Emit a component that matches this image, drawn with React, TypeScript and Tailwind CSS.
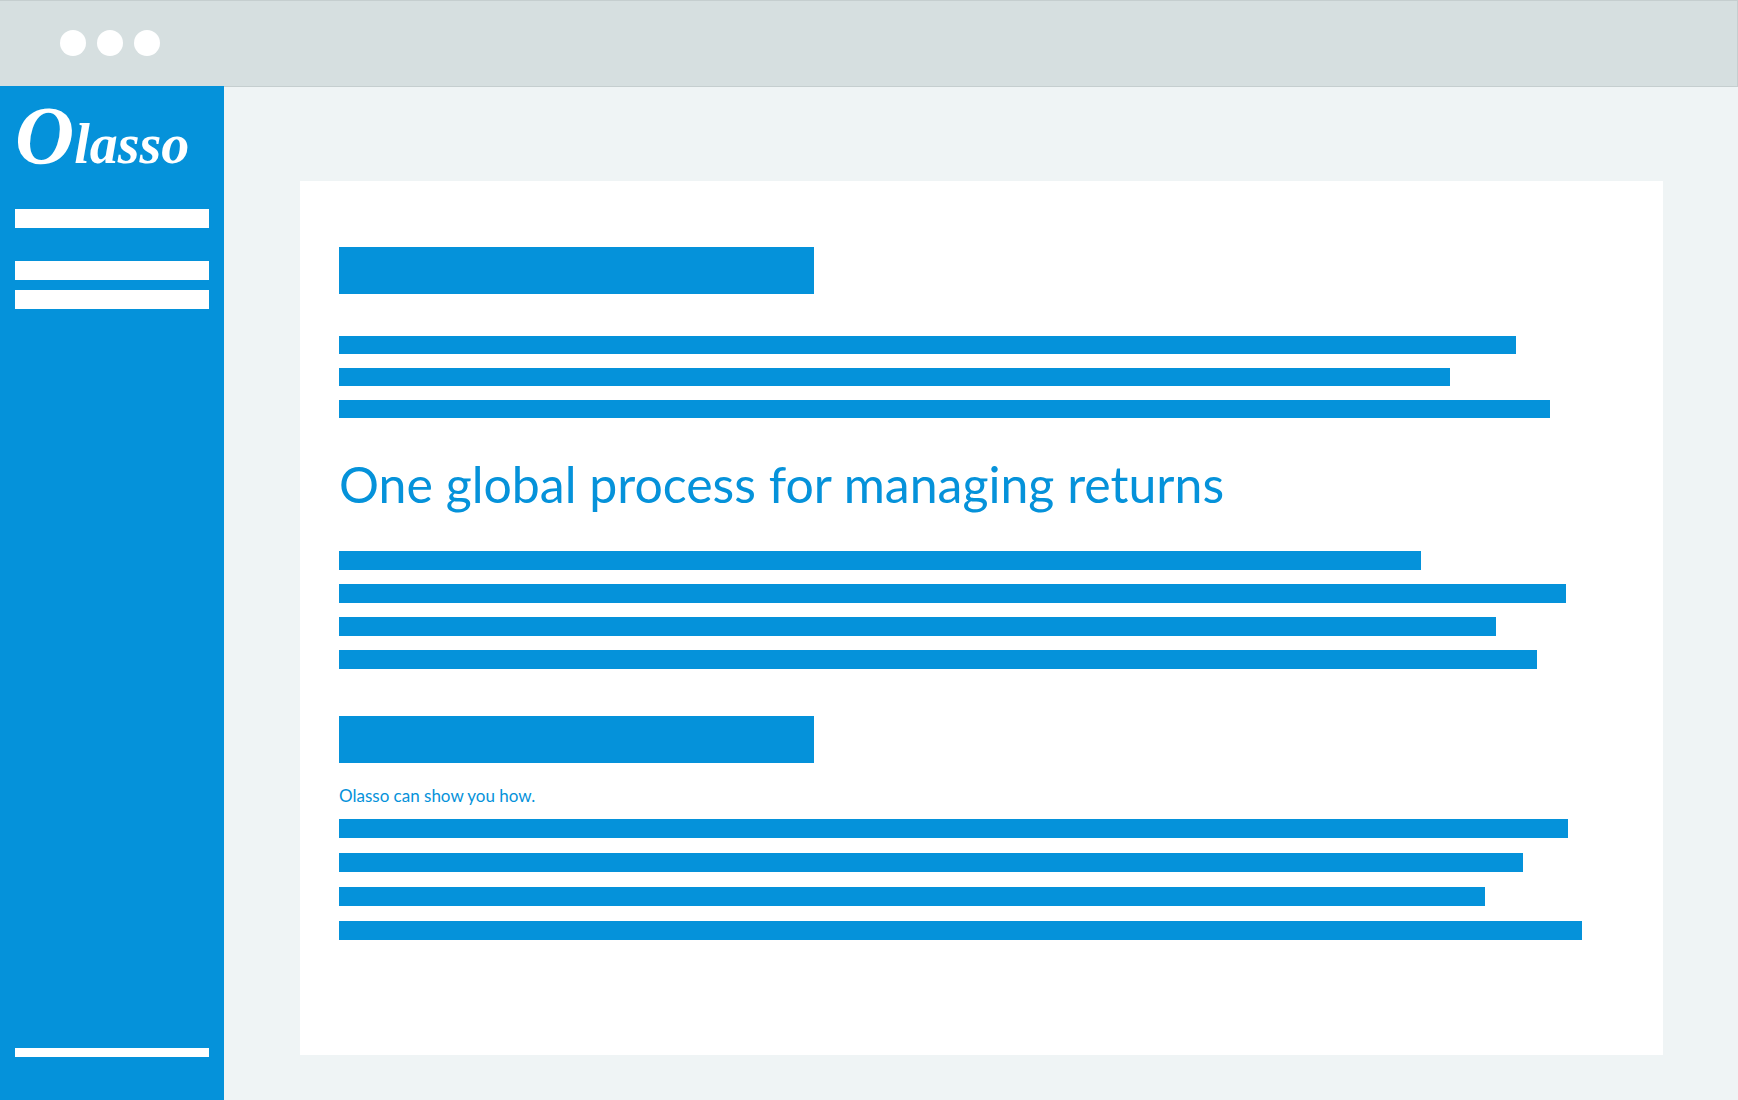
const FULL_LINE = 1285;

const introLines = [1177, 1111, 1211];
const processLines = [1082, 1227, 1157, 1198];
const closingLines = [1229, 1184, 1146, 1243];

function Lines({ lengths, className }: { lengths: number[]; className: string }) {
  return (
    <div aria-hidden="true" className={`flex flex-col ${className}`}>
      {lengths.map((length) => (
        <div
          key={length}
          className="grow bg-[#0592da]"
          style={{ width: `${(length / FULL_LINE) * 100}%` }}
        />
      ))}
    </div>
  );
}

function TitleBlock() {
  return <div aria-hidden="true" className="h-[47px] w-[37%] bg-[#0592da]" />;
}

function WindowBar() {
  return (
    <header className="flex h-[87px] shrink-0 items-center gap-[11px] border border-l-0 border-[#c5cecf] bg-[#d6dfe0] pb-[2px] pl-[60px]">
      <button type="button" aria-label="Close" className="size-[26px] rounded-full bg-white" />
      <button type="button" aria-label="Minimize" className="size-[26px] rounded-full bg-white" />
      <button type="button" aria-label="Maximize" className="size-[26px] rounded-full bg-white" />
    </header>
  );
}

function Sidebar() {
  return (
    <aside className="-mt-px flex w-56 shrink-0 flex-col bg-[#0592da] px-[15px] pb-[43px]">
      <a
        href="#"
        className="flex h-[123px] items-baseline font-['Liberation_Serif',serif] text-[56px] leading-[100px] font-bold text-white italic"
      >
        <span>
          <span className="text-[82px]">O</span>lasso
        </span>
      </a>
      <div aria-hidden="true" className="h-[19px] bg-white" />
      <div aria-hidden="true" className="mt-[33px] flex flex-col gap-[10px]">
        <div className="h-[19px] bg-white" />
        <div className="h-[19px] bg-white" />
      </div>
      <div aria-hidden="true" className="mt-auto h-[9px] bg-white" />
    </aside>
  );
}

export default function App() {
  return (
    <div className="flex min-h-screen flex-col bg-[#eff4f5] font-[Lato,sans-serif] text-[#0592da]">
      <WindowBar />
      <div className="flex grow">
        <Sidebar />
        <main className="flex min-w-0 grow pt-[94px] pr-[75px] pb-[45px] pl-[76px]">
          <article className="min-w-0 grow bg-white px-[39px] pt-[66px] pb-[115px]">
            <TitleBlock />
            <Lines lengths={introLines} className="mt-[42px] h-[82px] gap-[14px]" />
            <h1 className="mt-8 text-[50px] leading-[68px]">
              One global process for managing returns
            </h1>
            <Lines lengths={processLines} className="mt-[33px] h-[118px] gap-[14px]" />
            <div className="mt-[47px]">
              <TitleBlock />
            </div>
            <p className="mt-[21px] text-[17px] leading-6">Olasso can show you how.</p>
            <Lines lengths={closingLines} className="mt-[11px] h-[121px] gap-[15px]" />
          </article>
        </main>
      </div>
    </div>
  );
}
